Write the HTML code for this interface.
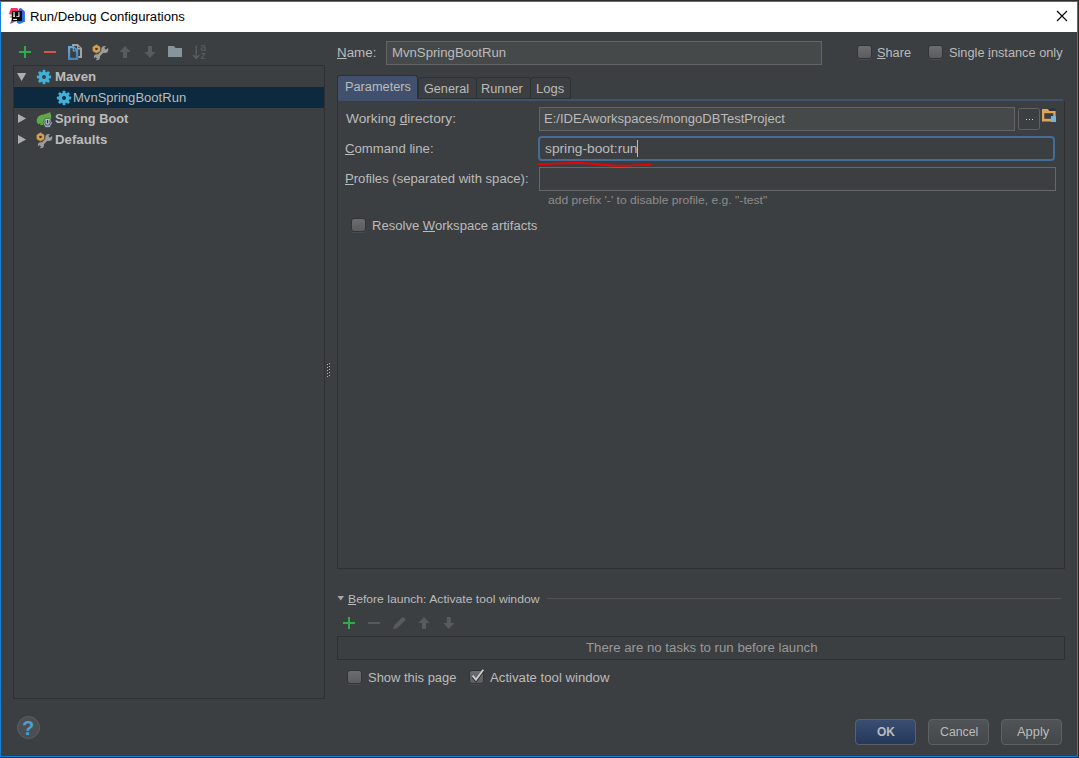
<!DOCTYPE html>
<html>
<head>
<meta charset="utf-8">
<title>Run/Debug Configurations</title>
<style>
html,body{margin:0;padding:0;}
body{width:1079px;height:758px;overflow:hidden;background:#2e2b2a;font-family:"Liberation Sans",sans-serif;font-size:12px;color:#bbbbbb;position:relative;}
.a{position:absolute;box-sizing:border-box;}
.t{position:absolute;white-space:nowrap;line-height:16px;height:16px;color:#bbbbbb;font-size:12px;transform-origin:0 50%;}
.b{font-weight:bold;}
u{text-decoration:underline;text-underline-offset:1px;text-decoration-thickness:1px;}
#win{left:0;top:1px;width:1078px;height:756px;background:#3c3f41;border:1px solid #1580d8;}
#title{left:1px;top:2px;width:1076px;height:30px;background:#ffffff;}
.field{background:#45494a;border:1px solid #646464;}
.cb{width:15px;height:14px;border-radius:3px;background:linear-gradient(#6b6d6e,#5a5c5d);border:1px solid #323537;box-shadow:0 1px 0 #484b4d;}
.btn{height:26px;border-radius:4px;border:1px solid #5e6162;background:linear-gradient(#505456,#43484a);}
</style>
</head>
<body>
<div class="a" id="win"></div>
<div class="a" id="title"></div>

<!-- title bar icon + close -->
<svg class="a" style="left:8px;top:7px" width="18" height="18" viewBox="0 0 18 18">
  <polygon points="3,1 9.3,1 11,4 4,8 0.9,7.1" fill="#fb2d6a"/>
  <polygon points="1.5,10.3 4,8 4,11" fill="#f58220"/>
  <polygon points="4,11 2,16.9 8.7,14 8.7,11" fill="#a83fb5"/>
  <defs><linearGradient id="gb" x1="0" y1="0" x2="0" y2="1"><stop offset="0" stop-color="#4a5bd6"/><stop offset="0.6" stop-color="#2a6bef"/><stop offset="1" stop-color="#0f7bf6"/></linearGradient><linearGradient id="gw" x1="0" y1="0" x2="0" y2="1"><stop offset="0" stop-color="#9a9a9a"/><stop offset="0.7" stop-color="#c8c8c8"/><stop offset="1" stop-color="#ffffff"/></linearGradient></defs>
  <polygon points="10.9,1.7 12.8,1 16.9,4.6 16.9,14.7 11.2,17.1 8.7,15.4 8.7,14 14,14 14,4 10.9,4" fill="url(#gb)"/>
  <rect x="4" y="4" width="10" height="10" fill="#0a0a0a"/>
  <rect x="5.2" y="5" width="1.7" height="5" fill="url(#gw)"/>
  <path d="M8.2 9.2 H10 Q10.2 9.2 10.2 9 V5 H11.6 V9 Q11.6 10 10.4 10 H8.2 Z" fill="url(#gw)"/>
  <rect x="5.2" y="11.9" width="3.8" height="1.1" fill="#e8e8e8"/>
</svg>
<svg class="a" style="left:1056px;top:10px" width="12" height="12" viewBox="0 0 12 12"><path d="M1 1 L11 11 M11 1 L1 11" stroke="#000" stroke-width="1.1" fill="none"/></svg>

<!-- left tree -->
<div class="a" style="left:13px;top:65px;width:312px;height:634px;border:1px solid #2e3031;"></div>
<div class="a" style="left:14px;top:87px;width:310px;height:21px;background:#0d293e;"></div>

<!-- name row -->
<div class="a field" style="left:386px;top:41px;width:436px;height:24px;"></div>
<div class="a cb" style="left:857px;top:45px;"></div>
<div class="a cb" style="left:928px;top:45px;"></div>

<!-- tabs -->
<div class="a" style="left:337px;top:75px;width:81px;height:26px;background:#41516d;border:1px solid #2e3133;border-bottom:none;border-radius:3px 3px 0 0;"></div>
<div class="a" style="left:418px;top:77px;width:59px;height:22px;border:1px solid #2e3133;border-radius:3px 3px 0 0;"></div>
<div class="a" style="left:476px;top:77px;width:55px;height:22px;border:1px solid #2e3133;border-radius:3px 3px 0 0;"></div>
<div class="a" style="left:530px;top:77px;width:41px;height:22px;border:1px solid #2e3133;border-radius:3px 3px 0 0;"></div>
<div class="a" style="left:338px;top:99px;width:725px;height:2px;background:#41516d;"></div>
<div class="a" style="left:337px;top:101px;width:728px;height:468px;border:1px solid #2e3031;border-top:none;"></div>

<!-- form -->
<div class="a field" style="left:539px;top:107px;width:476px;height:24px;"></div>
<div class="a" style="left:1018px;top:108px;width:22px;height:22px;border:1px solid #5f6263;border-radius:2.5px;"></div>
<div class="a" style="left:538px;top:136px;width:517px;height:25px;border:2px solid #436c96;border-radius:4px;"></div>
<div class="a" style="left:637px;top:140px;width:1px;height:17px;background:#bbbbbb;"></div>
<div class="a" style="left:539px;top:167px;width:517px;height:24px;border:1px solid #676767;"></div>
<div class="a cb" style="left:351px;top:218px;"></div>

<!-- before launch -->
<div class="a" style="left:547px;top:598px;width:515px;height:1px;background:#515151;"></div>
<div class="a" style="left:337px;top:636px;width:728px;height:24px;border:1px solid #2e3031;"></div>
<div class="a cb" style="left:347px;top:670px;"></div>
<div class="a cb" style="left:469px;top:670px;"></div>

<!-- buttons -->
<div class="a btn" style="left:855px;top:719px;width:61px;background:linear-gradient(#394e72,#24385a);"></div>
<div class="a btn" style="left:928px;top:719px;width:61px;"></div>
<div class="a btn" style="left:1001px;top:719px;width:61px;"></div>

<!-- help -->
<div class="a" style="left:17px;top:716px;width:23px;height:23px;border-radius:12px;background:#4b4f51;border:1px solid #5c5f61;"></div>
<span class="t b" style="left:22px;top:720px;font-size:20px;color:#4a9fd4;">?</span>

<!-- TEXT -->
<span class="t" style="left:30.00px;top:9px;font-size:12px;transform:scaleX(1.0955);color:#000000;">Run/Debug Configurations</span>
<span class="t b" style="left:55.43px;top:69px;font-size:12px;transform:scaleX(1.1009);">Maven</span>
<span class="t" style="left:73.03px;top:90px;font-size:12px;transform:scaleX(1.0876);">MvnSpringBootRun</span>
<span class="t b" style="left:54.92px;top:111px;font-size:12px;transform:scaleX(1.0682);">Spring Boot</span>
<span class="t b" style="left:55.46px;top:132px;font-size:12px;transform:scaleX(1.1034);">Defaults</span>
<span class="t" style="left:336.53px;top:45px;font-size:12px;transform:scaleX(1.1143);"><u>N</u>ame:</span>
<span class="t" style="left:391.71px;top:45px;font-size:12px;transform:scaleX(1.0972);">MvnSpringBootRun</span>
<span class="t" style="left:877.34px;top:45px;font-size:12px;transform:scaleX(1.0616);"><u>S</u>hare</span>
<span class="t" style="left:948.90px;top:45px;font-size:12px;transform:scaleX(1.0637);">Single <u>i</u>nstance only</span>
<span class="t" style="left:345.04px;top:79px;font-size:12px;transform:scaleX(1.0635);">Parameters</span>
<span class="t" style="left:423.96px;top:81px;font-size:12px;transform:scaleX(1.0540);">General</span>
<span class="t" style="left:481.24px;top:81px;font-size:12px;transform:scaleX(1.0635);">Runner</span>
<span class="t" style="left:536.15px;top:81px;font-size:12px;transform:scaleX(1.0813);">Logs</span>
<span class="t" style="left:345.81px;top:111px;font-size:12px;transform:scaleX(1.1393);">Working <u>d</u>irectory:</span>
<span class="t" style="left:544.21px;top:111px;font-size:12px;transform:scaleX(1.0856);">E:/IDEAworkspaces/mongoDBTestProject</span>
<span class="t" style="left:345.39px;top:141px;font-size:12px;transform:scaleX(1.0970);"><u>C</u>ommand line:</span>
<span class="t" style="left:544.78px;top:141px;font-size:12px;transform:scaleX(1.1461);">spring-boot:run</span>
<span class="t" style="left:345.46px;top:171px;font-size:12px;transform:scaleX(1.0919);"><u>P</u>rofiles (separated with space):</span>
<span class="t" style="left:548.35px;top:192px;font-size:11px;transform:scaleX(1.1010);color:#8c8c8c;">add prefix '-' to disable profile, e.g. "-test"</span>
<span class="t" style="left:371.84px;top:218px;font-size:12px;transform:scaleX(1.0892);">Resolve <u>W</u>orkspace artifacts</span>
<span class="t" style="left:347.95px;top:591px;font-size:11px;transform:scaleX(1.1064);"><u>B</u>efore launch: Activate tool window</span>
<span class="t" style="left:585.69px;top:640px;font-size:12px;transform:scaleX(1.1017);color:#999999;">There are no tasks to run before launch</span>
<span class="t" style="left:367.89px;top:670px;font-size:12px;transform:scaleX(1.0780);">Show this page</span>
<span class="t" style="left:490.46px;top:670px;font-size:12px;transform:scaleX(1.0988);">Activate tool window</span>
<span class="t b" style="left:877.46px;top:724px;font-size:12px;transform:scaleX(0.9949);">OK</span>
<span class="t" style="left:939.59px;top:724px;font-size:12px;transform:scaleX(1.0262);">Cancel</span>
<span class="t" style="left:1016.80px;top:724px;font-size:12px;transform:scaleX(1.0738);">Apply</span>
<!-- ICONS overlay in page coordinates -->
<svg class="a" style="left:0;top:0;" width="1079" height="758" viewBox="0 0 1079 758">
<defs>
  <linearGradient id="gcopy" x1="0" y1="0" x2="0.4" y2="1"><stop offset="0" stop-color="#6cadda"/><stop offset="1" stop-color="#4385b8"/></linearGradient>
  <g id="gear">
    <circle r="5.3"/>
    <g id="teeth2"><rect x="-1.4" y="-7.2" width="2.8" height="14.4" rx="0.8"/><rect x="-7.2" y="-1.4" width="14.4" height="2.8" rx="0.8"/></g>
    <use href="#teeth2" transform="rotate(45)"/>
  </g>
  <g id="wrench">
    <!-- 16x16 box, origin top-left -->
    <polygon points="4.46,0.8 8.0,2.9 8.0,7.0 4.46,9.1 0.9,7.0 0.9,2.9" fill="#d59f4d" stroke="#d59f4d" stroke-width="0.5" stroke-linejoin="round"/>
    <ellipse cx="4.46" cy="5.0" rx="1.35" ry="1.15" fill="#34373a"/>
    <g fill="#9c9c9c" stroke="none">
      <circle cx="12.75" cy="5.4" r="3.5"/>
      <circle cx="4.9" cy="13.25" r="3.0"/>
    </g>
    <path d="M5.0 13.2 L12.6 5.5" stroke="#9c9c9c" stroke-width="2.7" fill="none"/>
    <path d="M13.2 4.8 L16.8 1.2" stroke="#3c3f41" stroke-width="2.6"/>
    <path d="M4.3 13.9 L0.9 17.3" stroke="#3c3f41" stroke-width="2.3"/>
  </g>
  <g id="uparrow"><polygon points="5.6,0 11.2,6 7.6,6 7.6,12 3.6,12 3.6,6 0,6"/></g>
  <g id="downarrow"><polygon points="3.6,0 7.6,0 7.6,6 11.2,6 5.6,12 0,6 3.6,6"/></g>
</defs>

<!-- top toolbar -->
<g fill="#30ab4b"><rect x="24" y="46" width="2" height="12"/><rect x="19" y="51" width="12" height="2"/></g>
<rect x="44" y="51" width="12" height="2" fill="#d4554a"/>
<!-- copy -->
<path fill-rule="evenodd" fill="#a2a2a2" d="M72 44 H77.8 L82 48.2 V58 H78.2 V56 H80 V49.6 H77 V46 H72 Z M78.3 46.3 L80.1 48.1 H78.3 Z"/>
<path fill-rule="evenodd" fill="url(#gcopy)" d="M68 46 H73.6 L78.2 50 V60 H68 Z M70.2 48.2 H72.7 V51.4 H75.9 V57.8 H70.2 Z M74 48.3 L75.9 50.2 H74 Z"/>
<!-- wrench -->
<use href="#wrench" x="92" y="44"/>
<!-- arrows -->
<use href="#uparrow" x="119.4" y="46" fill="#595c5e"/>
<use href="#downarrow" x="144.4" y="46" fill="#595c5e"/>
<!-- folder -->
<path d="M168 46 H174 L175.5 48 H182 V57 H168 Z" fill="#87949b"/>
<!-- sort a-z -->
<g stroke="#5c5f61" fill="none" stroke-width="1.3"><path d="M196.2 45.5 V58.2 M193 55 L196.2 58.4 L199.4 55"/></g>
<text x="200.3" y="51" font-family="Liberation Sans" font-size="10.5" fill="#5c5f61">a</text>
<text x="200.6" y="59" font-family="Liberation Sans" font-size="10.5" fill="#5c5f61">z</text>

<!-- tree arrows -->
<polygon points="17,73 26.2,73 21.6,81" fill="#adadad"/>
<polygon points="18,114 26,118.5 18,123" fill="#adadad"/>
<polygon points="18,135 26,139.5 18,144" fill="#adadad"/>
<!-- gears -->
<use href="#gear" x="44" y="77" fill="#3fb2dc"/>
<circle cx="44" cy="77" r="2" fill="#3c3f41"/>
<use href="#gear" x="64" y="98" fill="#3fb2dc"/>
<circle cx="64" cy="98" r="2" fill="#0d293e"/>
<!-- spring boot -->
<path d="M49.9 111.7 C48.5 113.6 44.5 114 40.8 115 C38 116 36.7 118.4 36.7 120.5 C36.7 122.4 37.5 123.6 38.6 124.3 L40.7 122.9 L40 124.9 L43 124.9 L46 122 L50.8 120 C51.6 117.5 51.4 114.5 49.9 111.7 Z" fill="#5fa944"/>
<polygon points="43,122.9 45.3,118.4 49.8,118.4 52.2,122.9 49.8,127.3 45.3,127.3" fill="#b0c2cf" stroke="#3c3f41" stroke-width="0.6"/>
<path d="M45.7 120.6 A2.7 2.7 0 1 0 49.4 120.6" fill="none" stroke="#4f5c66" stroke-width="1.2"/>
<path d="M47.55 120 V123.3" stroke="#2e3236" stroke-width="1.3"/>
<!-- defaults -->
<use href="#wrench" x="36" y="132"/>

<!-- browse "..." dots & folder icon -->
<g fill="#d4d4d4"><rect x="1026" y="119" width="1" height="1"/><rect x="1029" y="119" width="1" height="1"/><rect x="1032" y="119" width="1" height="1"/></g>
<path d="M1042 109 H1047.6 L1049.4 111 H1055.6 V121.4 H1042 Z" fill="#dba65c"/>
<rect x="1044.3" y="113.2" width="9" height="5.6" fill="#3c3f41"/>
<rect x="1049.6" y="108.2" width="6" height="2.6" fill="#313335"/>
<rect x="1051" y="116" width="5" height="6" fill="#72b3df"/>

<!-- red scribble underline -->
<path d="M538.5 164.2 C552 164 566 162.6 580 163 C596 163.4 606 165.8 620 165.8 C632 165.8 642 164.6 650.5 164.6" fill="none" stroke="#f00000" stroke-width="1.9" stroke-linecap="round"/>

<!-- splitter dots -->
<g fill="#b4b4b4">
<rect x="327" y="364" width="1" height="1"/><rect x="327" y="367" width="1" height="1"/><rect x="327" y="370" width="1" height="1"/><rect x="327" y="373" width="1" height="1"/><rect x="327" y="376" width="1" height="1"/>
<rect x="329" y="363" width="1" height="1"/><rect x="329" y="366" width="1" height="1"/><rect x="329" y="369" width="1" height="1"/><rect x="329" y="372" width="1" height="1"/><rect x="329" y="375" width="1" height="1"/>
</g>
<g fill="#2d2f30">
<rect x="326" y="363" width="1" height="1"/><rect x="326" y="366" width="1" height="1"/><rect x="326" y="369" width="1" height="1"/><rect x="326" y="372" width="1" height="1"/><rect x="326" y="375" width="1" height="1"/>
<rect x="328" y="362" width="1" height="1"/><rect x="328" y="365" width="1" height="1"/><rect x="328" y="368" width="1" height="1"/><rect x="328" y="371" width="1" height="1"/><rect x="328" y="374" width="1" height="1"/>
</g>

<!-- before launch -->
<polygon points="337.5,596 344,596 340.75,600.5" fill="#a8a8a8"/>
<g fill="#30ab4b"><rect x="348" y="617" width="2" height="12"/><rect x="343" y="622" width="12" height="2"/></g>
<rect x="368" y="622" width="12" height="2" fill="#585b5d"/>
<path d="M393 629 L394.2 625.4 L402 617.6 Q403 616.8 404 617.8 L405 618.8 Q405.8 619.8 405 620.6 L397 628.2 Z" fill="#585b5d"/>
<use href="#uparrow" x="418.4" y="617" fill="#585b5d"/>
<use href="#downarrow" x="443.2" y="617" fill="#585b5d"/>

<!-- checkmark -->
<path d="M472.6 675.7 L475.9 679.7 L483.3 669.7" fill="none" stroke="#2b2b2b" stroke-width="2.2" transform="translate(0,1.2)"/>
<path d="M472.6 675.7 L475.9 679.7 L483.3 669.7" fill="none" stroke="#cdcdcd" stroke-width="1.9"/>
</svg>
</body>
</html>
